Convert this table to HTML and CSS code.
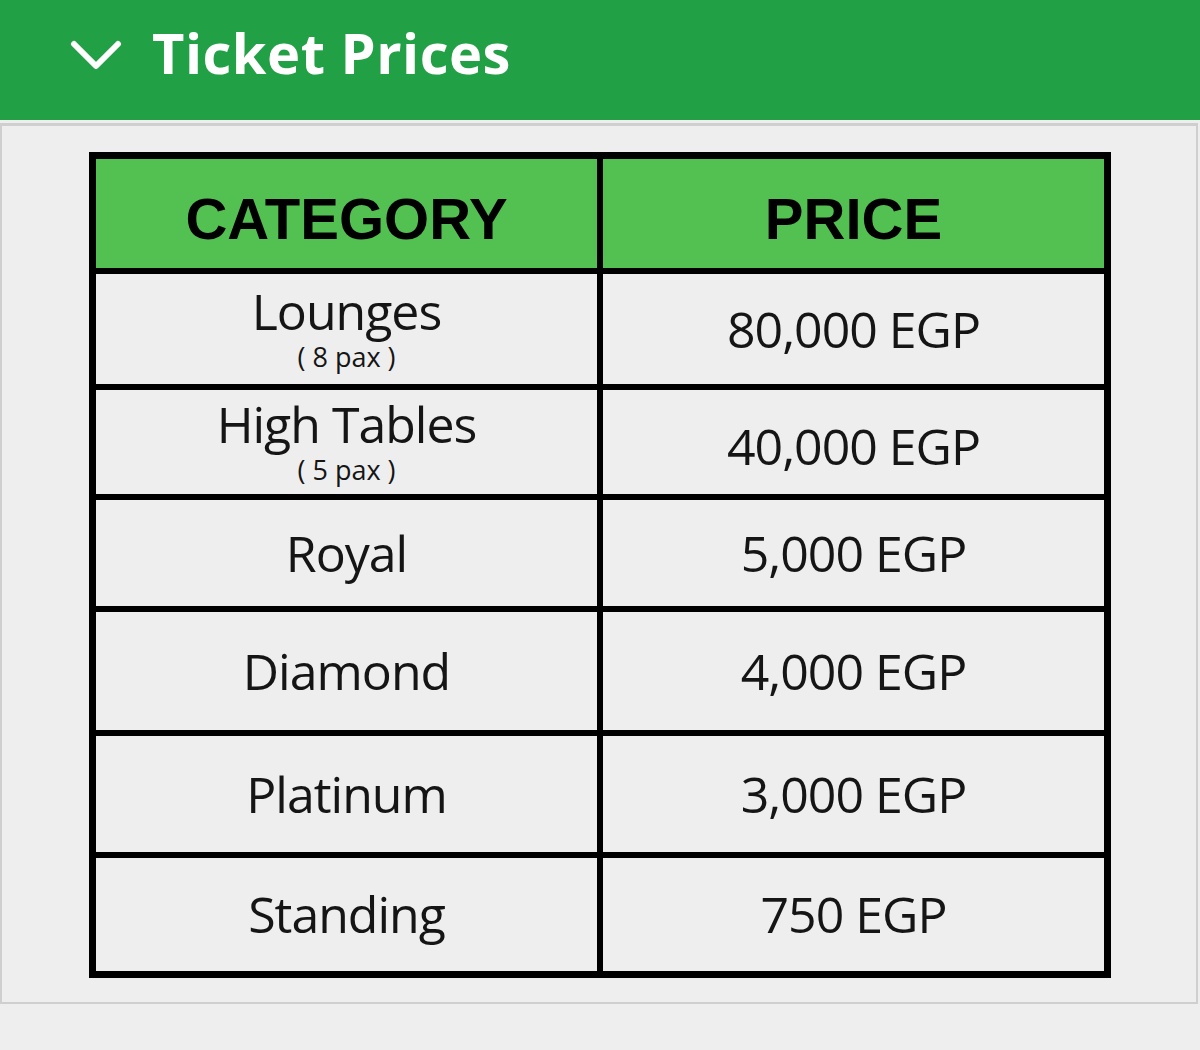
FILE: index.html
```html
<!DOCTYPE html>
<html lang="en">
<head>
    <meta charset="UTF-8">
    <meta name="viewport" content="width=device-width, initial-scale=1.0">
    <title>Ticket Prices</title>
    <link rel="stylesheet" href="styles.css">
</head>
<body>
    <div class="accordion-header">
        <svg class="chevron" width="52" height="34" viewBox="0 0 52 34">
            <polyline points="4,6 26,28 48,6" fill="none" stroke="#fff" stroke-width="6" stroke-linecap="round" stroke-linejoin="round"/>
        </svg>
        <h2>Ticket Prices</h2>
    </div>

    <div class="accordion-panel">
        <table class="prices">
            <thead>
                <tr>
                    <th>CATEGORY</th>
                    <th>PRICE</th>
                </tr>
            </thead>
            <tbody>
                <tr class="row-lounges">
                    <td><span class="cat">Lounges</span><span class="pax">( 8 pax )</span></td>
                    <td>80,000 EGP</td>
                </tr>
                <tr class="row-high">
                    <td><span class="cat">High Tables</span><span class="pax">( 5 pax )</span></td>
                    <td class="low">40,000 EGP</td>
                </tr>
                <tr class="row-royal">
                    <td>Royal</td>
                    <td>5,000 EGP</td>
                </tr>
                <tr class="row-diamond">
                    <td>Diamond</td>
                    <td>4,000 EGP</td>
                </tr>
                <tr class="row-platinum">
                    <td>Platinum</td>
                    <td>3,000 EGP</td>
                </tr>
                <tr class="row-standing">
                    <td>Standing</td>
                    <td>750 EGP</td>
                </tr>
            </tbody>
        </table>
    </div>
</body>
</html>
```

FILE: styles.css
```css
* {
    margin: 0;
    padding: 0;
    box-sizing: border-box;
}

body {
    font-family: "Open Sans", "Noto Sans", sans-serif;
    background-color: #eeeeee;
    width: 1200px;
    height: 1050px;
    overflow: hidden;
}

/* Barra verde do acordeão */
.accordion-header {
    background-color: #22a045;
    height: 120px;
    display: flex;
    align-items: center;
    padding-left: 70px;
    padding-bottom: 16px;
    gap: 30px;
}

.chevron {
    margin-top: 6px;
}

.accordion-header h2 {
    color: #fff;
    font-size: 56px;
    font-weight: 700;
    letter-spacing: 0.5px;
}

.accordion-panel {
    margin-top: 3px;
    border: 2px solid #cfcfcf;
    border-top-width: 3px;
    width: 1198px;
    padding: 26px 0 24px 87px;
    background-color: #eeeeee;
}

/* Tabela de preços */
.prices {
    width: 1022px;
    border-collapse: collapse;
    table-layout: fixed;
    border: 7px solid #000;
    color: #151515;
}

.prices th,
.prices td {
    border: 6px solid #000;
    text-align: center;
    vertical-align: middle;
}

.prices th {
    background-color: #53c152;
    font-family: "Liberation Sans", Arial, sans-serif;
    font-weight: 700;
    font-size: 58px;
    height: 115px;
    color: #000;
    padding-top: 10px;
}

.prices td {
    font-size: 50px;
    line-height: 1;
    letter-spacing: -1px;
}

.cat {
    display: block;
    line-height: 1;
}

.pax {
    display: block;
    font-size: 27px;
    line-height: 1.1;
    letter-spacing: 0;
    margin-top: 6px;
}

.row-lounges td { height: 116px; }
.row-high td { height: 110px; }
.row-high td.low { padding-top: 8px; }
.row-royal td { height: 112px; }
.row-diamond td { height: 124px; }
.row-platinum td { height: 122px; }
.row-standing td { height: 120px; }
```
